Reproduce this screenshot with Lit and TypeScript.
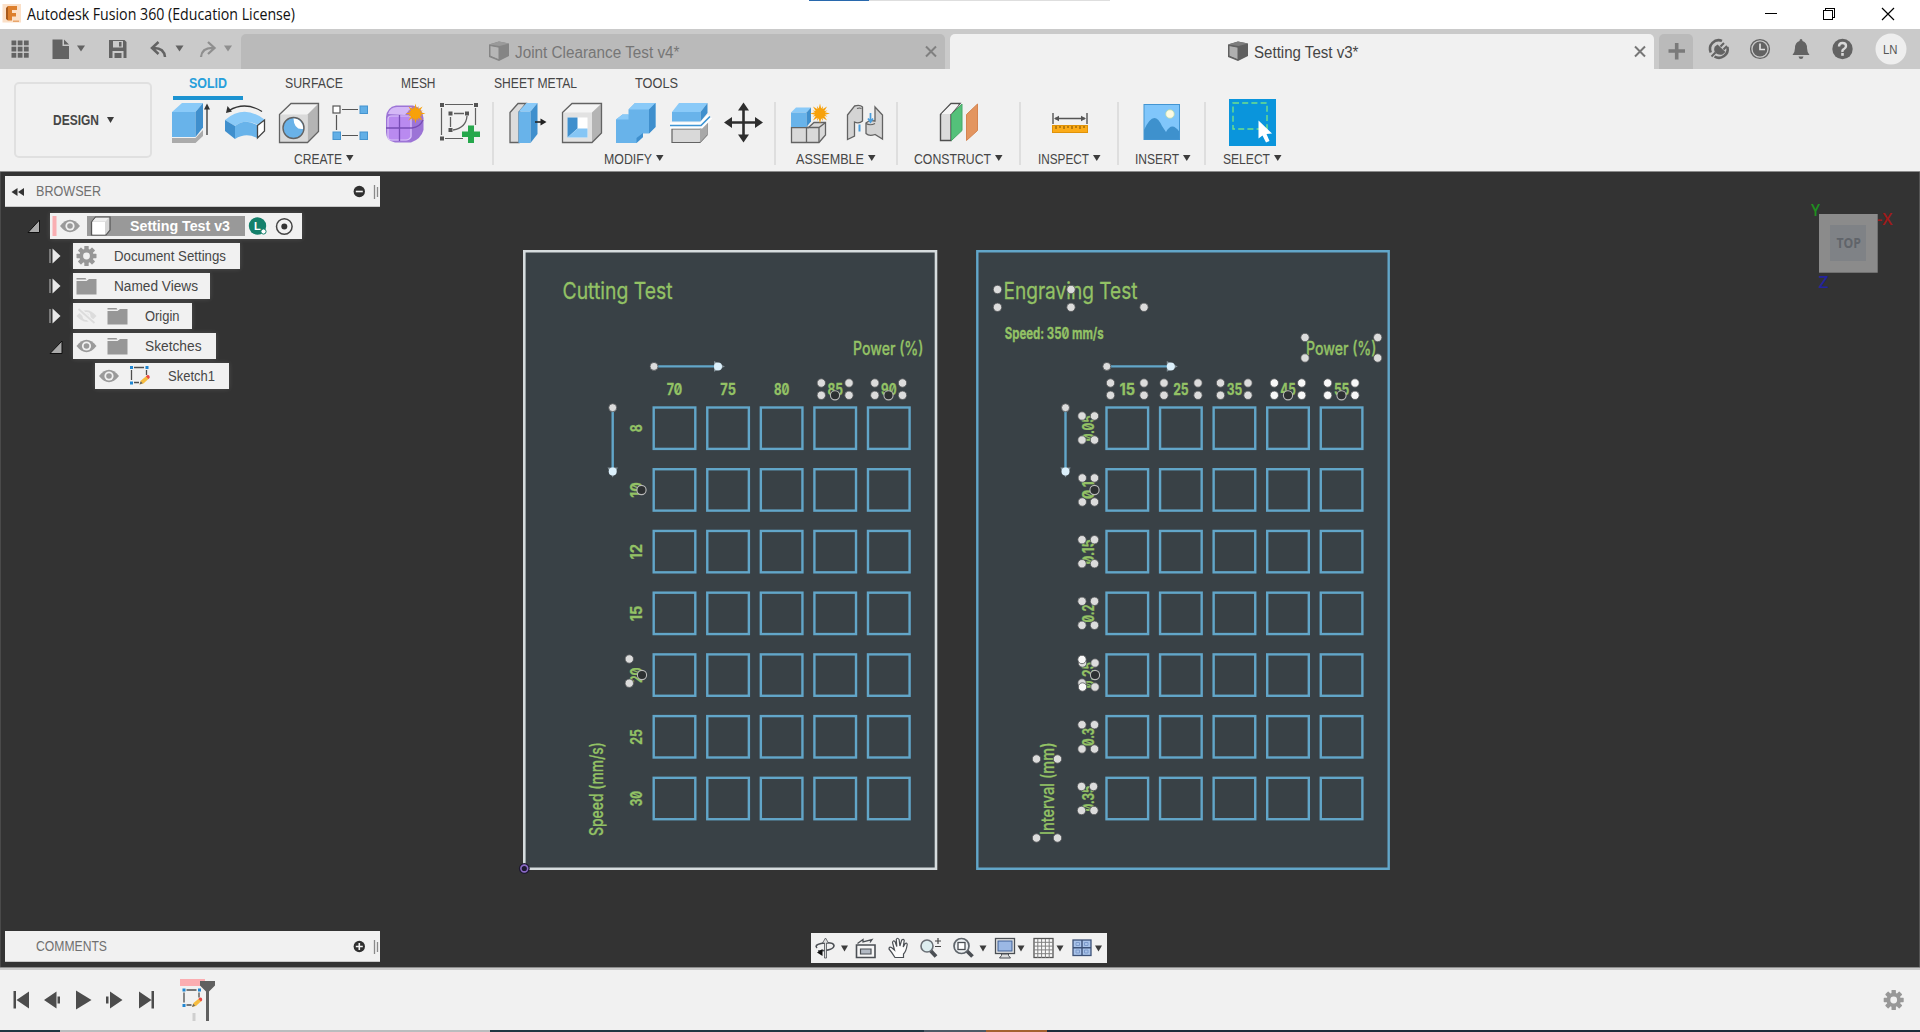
import { LitElement, html, svg, css, SVGTemplateResult, TemplateResult } from "lit";
import { customElement, property } from "lit/decorators.js";

/* A slice of a toolbar strip; drawing coordinates run from x0 to x1 and y0 to y1. */
const slice = (x0: number, x1: number, y0: number, y1: number, body: SVGTemplateResult | SVGTemplateResult[]) =>
  html`<svg class="slice" width=${x1 - x0} height=${y1 - y0} viewBox="${x0} ${y0} ${x1 - x0} ${y1 - y0}">${body}</svg>`;

/* A text run condensed to a fixed advance width. */
const label = (text: string, width: number, cls = "ui14") =>
  html`<svg class="label" width=${width} height="20"><text class=${cls} x="0" y="15" textLength=${width} lengthAdjust="spacingAndGlyphs">${text}</text></svg>`;

const caret = (x: number, y: number, w = 8, fill = "#3c3c3c") =>
  svg`<path d="M${x} ${y}h${w}l${-w / 2} 6z" fill=${fill}/>`;

const gearPath = (cx: number, cy: number, fill: string) => svg`
  <g transform="translate(${cx} ${cy})" fill=${fill}>
    ${[0, 45, 90, 135].map((a) => svg`<rect x="-2.2" y="-10" width="4.4" height="20" rx="0.6" transform="rotate(${a})"/>`)}
    <circle r="7.2"/><circle r="3.4" fill="#f1f1f1"/>
  </g>`;

const star = (cx: number, cy: number) => svg`
  <g transform="translate(${cx} ${cy})" fill="#f7a10a">
    ${[0, 22.5, 45, 67.5].map((a) => svg`<path d="M0 -10L2.4 0L0 10L-2.4 0Z M-10 0L0 -2.4L10 0L0 2.4Z" transform="rotate(${a}) scale(${a % 45 ? 0.8 : 1})"/>`)}
    <circle r="5"/>
  </g>`;

const eye = (cx: number) => svg`
  <path d="M${cx - 10} 13Q${cx} 0.5 ${cx + 10} 13Q${cx} 25.5 ${cx - 10} 13Z" fill="#9a9a9a"/>
  <circle cx=${cx} cy="13" r="4.6" fill="#f1f1f1"/><circle cx=${cx} cy="13" r="2.8" fill="#9a9a9a"/>`;

const eyeOff = (cx: number) => svg`
  <path d="M${cx - 10} 13Q${cx} 1.5 ${cx + 10} 13Q${cx} 24.5 ${cx - 10} 13Z" fill="#dcdcdc"/>
  <circle cx=${cx} cy="13" r="4" fill="#f1f1f1"/><circle cx=${cx} cy="13" r="2.4" fill="#dcdcdc"/>
  <path d="M${cx - 9} 5L${cx + 8} 21" stroke="#f1f1f1" stroke-width="5"/><path d="M${cx - 8} 6L${cx + 8} 20" stroke="#dcdcdc" stroke-width="1.8"/>`;

const folder = (x: number) => svg`<path d="M${x} 5h9l1 1.6h-10z M${x} 8h10l2.5 -2h7.5v15.500h-20z" fill="#979797"/>`;

const sketchMark = (x: number, y: number) => svg`
  <path d="M${x + 1.5} ${y + 4}v10 M${x + 4} ${y + 1.500}h10 M${x + 16.500} ${y + 4}v5 M${x + 4} ${y + 16.500}h5" stroke="#4f4f4f" stroke-width="1.300" fill="none"/>
  <path d="M${x} ${y}h3v3h-3z M${x + 15.500} ${y}h3v3h-3z M${x} ${y + 15.500}h3v3h-3z" fill="#1f86d2"/>
  <path d="M${x + 9.500} ${y + 18.500}l1.500 -4l6 -5l2.500 2.500l-6 5.500z" fill="#f6bc3f"/>
  <path d="M${x + 16} ${y + 10.500}q2 -2.500 3.500 -.500q1 1.500 -1 3z" fill="#ea4747"/>
  <path d="M${x + 9.500} ${y + 18.500}l1.200 -3.200l2 2z" fill="#666"/>`;

const docCube = (x: number, a: string, b: string, c: string) => svg`
  <path d="M${x} 44.500L${x + 10} 41.500L${x + 20} 43.500V56L${x + 10} 61L${x} 57Z" fill=${b}/>
  <path d="M${x} 44.500L${x + 10} 41.500L${x + 20} 43.500L${x + 10.500} 46Z" fill=${c}/>
  <path d="M${x + 1} 45.500L${x + 10} 47.200V59.800L${x + 1} 56Z" fill=${a} stroke=${b} stroke-width="1"/>`;

const E = "#636363";

const createIcons = [
  slice(162, 218, 99, 147, svg`
    <path d="M172 138h23.500l7.500 -8v6l-7.500 7h-23.500z" fill="#ababab"/>
    <path d="M172 112l10 -9h21l-7.500 9z" fill="#8acaf8"/><path d="M172 112h23.500v25h-23.500z" fill="#68b3ea"/>
    <path d="M195.500 112l7.500 -9v24.500l-7.500 9.500z" fill="#3f8fcd"/>
    <path d="M207 135v-26" stroke="#333" stroke-width="1.300"/><path d="M204 109.500l3 -6l3 6z" fill="#333"/>`),
  slice(218, 272, 99, 147, svg`
    <path d="M225 120Q244 104 264.500 119.500L258 125Q245 118 235 126Z" fill="#8acaf8"/>
    <path d="M225 120L235 126V139L225 131Z" fill="#3f8fcd"/>
    <path d="M235 126Q245 118 257 125V138Q246 132 235 139Z" fill="#68b3ea"/>
    <path d="M257.500 125.500L264.500 120V131L257.500 138Z" fill="#fff" stroke="#444" stroke-width="1.300"/>
    <path d="M229 110.500Q245 101 262 111.500" fill="none" stroke="#333" stroke-width="1.300"/><path d="M226 113l1.500 -7l4.500 5.500z" fill="#333"/>`),
  slice(272, 326, 99, 147, svg`
    <path d="M279.500 114.500L291 103.500H318.500L307.500 114.500Z" fill="#f3f3f3"/><path d="M307.500 114.500L318.500 103.500V131.500L307.500 142.500Z" fill="#b4b4b4"/>
    <path d="M279.500 114.500H307.500V142.500H279.500Z" fill="#dadada"/><path d="M279.500 114.500L291 103.500H318.500V131.500L307.500 142.500H279.500Z" fill="none" stroke=${E} stroke-width="1.300"/>
    <circle cx="293.500" cy="128" r="10.500" fill="#6ab2e8" stroke=${E} stroke-width="1.400"/><path d="M293.500 118.500A9.500 9.500 0 0 1 303 129Q294 130 293.500 118.500Z" fill="#fff"/>`),
  slice(326, 378, 99, 147, svg`
    <path d="M342 109.500h16 M336.500 115v15 M342 135.500h16" stroke="#555" stroke-width="1.200"/>
    <rect x="333" y="106" width="7" height="7" fill="#fff" stroke="#555" stroke-width="1.200"/>
    <g fill="#62afe6" stroke="#4594cf" stroke-width="1"><rect x="360" y="106" width="7.500" height="7.500"/><rect x="333" y="132" width="7.500" height="7.500"/><rect x="360" y="132" width="7.500" height="7.500"/></g>`),
  slice(378, 432, 99, 147, svg`
    <path d="M386 117Q387 107 396 105.500H413Q423 108 423.500 118V130Q421 139 411 142.500H395Q386 141 386 132Z" fill="#9c74d6"/>
    <path d="M388 114Q390 107 397 107H412L405 115Z" fill="#d4b8f6"/><rect x="387.500" y="115.500" width="24" height="25" rx="5" fill="#b98af0"/>
    <path d="M391 116h17q3 0 3 3v18q-2 3 -5 3h-15q-3 0 -3 -3v-18q0 -3 3 -3z" fill="none" stroke="#d9c3f7" stroke-width="1.200"/>
    <path d="M399.500 115v26 M386 128H412Q420 127 423 120" stroke="#774cb5" stroke-width="1.300" fill="none"/>${star(415.500, 113.500)}`),
  slice(432, 486, 99, 147, svg`
    <path d="M445 104.500h28 M441.500 108v27 M475.500 108v17 M445 138.500h18" stroke="#606060" stroke-width="1.200"/>
    <path d="M454 113.500h10 M450.500 117v10 M467 116Q466 128 453 130" stroke="#606060" stroke-width="1.300" fill="none"/>
    <path d="M440 103h4v4h-4z M474 103h4v4h-4z M440 136.500h4v4h-4z M448.500 111.500h4v4h-4z M465 111.500h4v4h-4z M448.500 128h4v4h-4z" fill="#555"/>
    <path d="M468 125.500h6v6h6v5.500h-6v6h-6v-6h-6v-5.500h6z" fill="#26a84c"/>`),
];

const modifyIcons = [
  slice(503, 552, 99, 147, svg`
    <path d="M509 112.500L517 103.500H525L518 112V142.500H509Z" fill="#dcdcdc" stroke=${E} stroke-width="1.300"/>
    <path d="M517.500 111.500L525.500 103H536.500L529.500 111.500Z" fill="#8acaf8"/><path d="M517.500 111.500h12v31.500h-12z" fill="#68b3ea"/><path d="M529.500 111.500L536.500 103V134L529.500 143Z" fill="#3f8fcd"/>
    <path d="M534 122h7" stroke="#222" stroke-width="1.600"/><path d="M539.500 118.500l6 3.500l-6 3.500z" fill="#222"/>`),
  slice(552, 606, 99, 147, svg`
    <path d="M561.500 112.500L571 103.500H600.500L591 112.500Z" fill="#f5f5f5"/><path d="M591 112.500L600.500 103.500V133L591 142.500Z" fill="#b4b4b4"/>
    <path d="M561.500 112.500H591V142.500H561.500Z" fill="#e2e2e2"/><path d="M561.500 112.500L571 103.500H600.500V133L591 142.500H561.500Z" fill="none" stroke=${E} stroke-width="1.300"/>
    <rect x="566.500" y="117.500" width="20" height="20" fill="#fff"/><path d="M566.500 117.500h10v11l-10 9z" fill="#3f8fcd"/><path d="M576.500 128.500h10v9h-20z" fill="#86c6f5"/>`),
  slice(606, 661, 99, 147, svg`
    <path d="M615 119.500L621.500 114.500H627.500V109.500L634 103H654.500V127L648 133.500H642V137L635.500 143H615Z" fill="#68b3ea"/>
    <path d="M627.500 109.500L634 103H654.500L648 109.500Z M615 119.500L621.500 114.500H627.500V119.500Z" fill="#8acaf8"/>
    <path d="M648 109.500L654.500 103V127L648 133.500Z M635.500 138L642 133V137L635.500 143Z" fill="#3f8fcd"/>`),
  slice(661, 715, 99, 147, svg`
    <path d="M671 129h28l7 -7v13l-7 7.500h-28z" fill="#d9d9d9" stroke=${E} stroke-width="1.200"/><path d="M699 129l7 -7v13l-7 7.500z" fill="#a8a8a8"/>
    <path d="M671 112l7 -9h28.500l-7 9z" fill="#8acaf8"/><path d="M671 112h28.500v9.500h-28.500z" fill="#68b3ea"/><path d="M699.500 112l7 -9v10l-7 8.500z" fill="#3f8fcd"/>
    <path d="M669 125.500h31l9 -9" fill="none" stroke="#fff" stroke-width="6"/><path d="M669 125.500h31l9 -9" fill="none" stroke="#3f95d4" stroke-width="1.700"/>`),
  slice(715, 764, 99, 147, svg`
    <path d="M742.500 108v29 M728 122.500h29" stroke="#2e2e2e" stroke-width="2.600"/>
    <path d="M737 110.500l5.500 -8l5.500 8z M737 134.500l5.500 8l5.500 -8z M731 117l-8 5.500l8 5.500z M754 117l8 5.500l-8 5.500z" fill="#2e2e2e"/>`),
];

const assembleIcons = [
  slice(785, 837, 99, 147, svg`
    <path d="M807 128L813 122.500H824.500V135L818 142.500H790.500V127.500H807" fill="#d9d9d9" stroke=${E} stroke-width="1.300"/><path d="M805.500 127.500V142.500 M805.500 127.500H818L824.500 122.500 M818 127.500V142" fill="none" stroke=${E} stroke-width="1.300"/>
    <path d="M790 112.500L795 107.500H810L805.500 112.500Z" fill="#8acaf8"/><path d="M790 112.500h15.500v14.500h-15.500z" fill="#68b3ea"/><path d="M805.500 112.500l4.500 -5v14l-4.500 5.500z" fill="#3f8fcd"/>${star(819, 113.500)}`),
  slice(837, 886, 99, 147, svg`
    <path d="M846.500 115L853.500 106Q859 104.500 861.500 107V121Q858 124 853.500 122V136L846.500 139.500Z" fill="#d4d4d4" stroke=${E} stroke-width="1.300"/>
    <path d="M856 108.500Q858.500 107.500 860.500 108.500" fill="none" stroke=${E} stroke-width="1.200"/><path d="M858.500 124.500v7" stroke="#4a9ddb" stroke-width="2"/>
    <path d="M874 107L881.500 115V139L874 134.500Q868 136.500 865 133.500V123Q868 119.500 874 121Z" fill="#d4d4d4" stroke=${E} stroke-width="1.300"/>
    <path d="M865 123.500Q869 126 874 123.500" fill="none" stroke=${E} stroke-width="1.200"/>
    <path d="M869.500 113v9 M867 118.500l2.500 3.500l2.500 -3.500" stroke="#4a9ddb" stroke-width="1.700" fill="none"/>`),
];

const constructIcon = slice(935, 982, 99, 147, svg`
  <path d="M940.500 114.500L951 103.500H960L951 114.500V140.500H940.500Z" fill="#dcdcdc" stroke="#505050" stroke-width="1.400"/><path d="M941.500 114L951 104.500H959L951 114Z" fill="#f5f5f5"/>
  <path d="M951.500 114.500L962 104V130.500L951.500 140.500Z" fill="#54c17a" stroke="#46a968"/><path d="M966.500 114.500L977.500 104V130.500L966.500 140.500Z" fill="#e3955f" stroke="#d58450"/>`);

const inspectIcon = slice(1046, 1093, 99, 147, svg`
  <path d="M1053 113v11 M1087 113v11 M1055 118.500h30" stroke="#555" stroke-width="1.400"/><path d="M1054 118.500l5 -2.800v5.600z M1086 118.500l-5 -2.800v5.600z" fill="#555"/>
  <rect x="1052.500" y="125.500" width="35" height="7" fill="#fbab18" stroke="#e09309"/>
  <path d="M1056 126v3 M1060 126v2 M1064 126v3 M1068 126v2 M1072 126v3 M1076 126v2 M1080 126v3 M1084 126v2" stroke="#7a4e00" stroke-width="1"/>`);

const insertIcon = slice(1139, 1185, 99, 147, svg`
  <rect x="1144" y="104.500" width="35.500" height="35" fill="#80c6fb"/>
  <path d="M1144 130Q1154 108 1162 126L1166 132Q1172 121 1179.500 132V139.500H1144Z" fill="#3e91cd"/>
  <circle cx="1170" cy="114" r="4.300" fill="#fdfbe2" stroke="#b5d8ae" stroke-width=".800"/><rect x="1144" y="104.500" width="35.500" height="35" fill="none" stroke="#4395d2"/>`);

const selectIcon = slice(1228, 1276, 99, 147, svg`
  <rect x="1229" y="99" width="47" height="47" fill="#0a95dc"/><rect x="1233" y="103" width="34" height="26" fill="none" stroke="#6fe08a" stroke-width="1.400" stroke-dasharray="6 3.200"/>
  <path d="M1258.500 120.500V138.500L1262.500 135.500L1266 142.500L1269.500 141L1266.500 134L1272 133.500Z" fill="#fff"/>`);

const groups: [string, string, number, TemplateResult[]][] = [
  ["create", "CREATE", 48, createIcons],
  ["modify", "MODIFY", 48, modifyIcons],
  ["assemble", "ASSEMBLE", 68, assembleIcons],
  ["construct", "CONSTRUCT", 77, [constructIcon]],
  ["inspect", "INSPECT", 51, [inspectIcon]],
  ["insert", "INSERT", 44, [insertIcon]],
  ["select", "SELECT", 47, [selectIcon]],
];

const sharedStyles = css`
  svg { display: block; flex: none; }
  .label { overflow: visible; }
  .ui14 { font: 14px "Liberation Sans", Arial, sans-serif; fill: #464646; }
  .ui14b { font: bold 14px "Liberation Sans", Arial, sans-serif; fill: #464646; }
`;

@customElement("title-bar")
class TitleBar extends LitElement {
  static styles = [sharedStyles, css`
    :host { display: flex; height: 29px; background: #fff; position: relative; }
    .grow { flex: 1; }
    .title { font: 15.5px "Open Sans", "Noto Sans", sans-serif; fill: #111; }
    .hint { position: absolute; left: 809px; top: 0; width: 301px; height: 1px; background: linear-gradient(90deg, #2868ad 60px, #dedede 60px); }
    .text { margin-top: 5px; }
  `];
  render() {
    return html`
      ${slice(0, 27, 0, 29, svg`
        <rect x="2.500" y="4" width="18.500" height="18.500" fill="#fbe0c8"/>
        <path d="M8 6h9v4h-5v3h4v3.500h-4v4h-4z" fill="#dd7f2c"/><path d="M8 6l-2 2v11l2 1.500z" fill="#a85a1c"/><path d="M13 20.500h6v1.500h-6z" fill="#e9a66c"/>`)}
      <div class="text">${label("Autodesk Fusion 360 (Education License)", 268, "title")}</div>
      <div class="grow"></div>
      ${slice(1740, 1920, 0, 29, svg`
        <path d="M1765 13.500h12 M1823.500 10.500h9v9h-9z M1825.500 10.500v-2h9v9h-2" fill="none" stroke="#000" shape-rendering="crispEdges"/>
        <path d="M1882 8l12 12 M1894 8l-12 12" stroke="#000" stroke-width="1.200"/>`)}
      <div class="hint"></div>`;
  }
}

@customElement("document-bar")
class DocumentBar extends LitElement {
  static styles = [sharedStyles, css`
    :host { display: flex; height: 40px; background: #cacaca; }
    .tab { display: flex; width: 704px; height: 35px; margin: 5px 5px 0 0; border-radius: 5px 5px 0 0; background: #bababa; }
    .tab.active { background: #f1f1f1; }
    .name { flex: 1; display: flex; justify-content: center; gap: 5px; }
    .name .label { margin-top: 9px; }
    .close { overflow: visible; }
    .add { width: 34px; height: 35px; margin-top: 5px; background: #bababa; border-radius: 5px 5px 0 0; }
    .dim { font: 16px "Liberation Sans", Arial, sans-serif; fill: #767676; }
    .lit { font: 16px "Liberation Sans", Arial, sans-serif; fill: #454545; }
    .user { font: 12.5px "Liberation Sans", Arial, sans-serif; fill: #555; }
  `];
  private tab(name: string, width: number, active: boolean) {
    return html`<div class="tab ${active ? "active" : ""}">
      <div class="name">
        ${slice(0, 21, 34, 69, active ? docCube(0, "#b0b0b0", "#606060", "#7d7d7d") : docCube(0, "#b6b6b6", "#858585", "#9a9a9a"))}
        ${label(name, width, active ? "lit" : "dim")}
      </div>
      <svg class="close" width="18" height="35"><path d="M-1 12.500l10 10 M9 12.500l-10 10" stroke=${active ? "#777" : "#808080"} stroke-width="2"/></svg>
    </div>`;
  }
  render() {
    const c = "#636363";
    return html`
      ${slice(0, 40, 29, 69, [0, 1, 2].flatMap((r) => [0, 1, 2].map((k) => svg`<rect x=${11.5 + k * 6.200} y=${40.500 + r * 6.200} width="4.800" height="4.800" fill=${c}/>`)))}
      ${slice(40, 96, 29, 69, svg`<path d="M52.500 39.500h10v6.500h6.500v13h-16.500z M64 39.500l5 5h-5z" fill=${c}/>${caret(77, 45.500, 8, c)}`)}
      ${slice(96, 140, 29, 69, svg`<path d="M109 40h15.500l2 2v16h-17.500z" fill=${c}/><path d="M113 41h10v6.500h-10z M112.500 51h11v7h-11z" fill="#cacaca"/><path d="M119 42h2.500v4.500h-2.500z M114.500 53h7v5h-7z" fill=${c}/>`)}
      ${slice(140, 192, 29, 69, svg`<path d="M158.500 42l-6.500 6l6.500 6 M152 48Q164 47 165 57" fill="none" stroke=${c} stroke-width="2.500"/>${caret(175.500, 45.500, 8, c)}`)}
      ${slice(192, 241, 29, 69, svg`<path d="M208 42l6.500 6l-6.500 6 M214.500 48Q202 47 201 57" fill="none" stroke="#8f8f8f" stroke-width="2.300"/>${caret(224, 45.500, 8, "#8f8f8f")}`)}
      ${this.tab("Joint Clearance Test v4*", 164.5, false)}
      ${this.tab("Setting Test v3*", 104.5, true)}
      <div class="add">${slice(1659, 1693, 34, 69, svg`<path d="M1676.700 43v16.500 M1668.500 51h16.500" stroke="#7a7a7a" stroke-width="3.600"/>`)}</div>
      ${slice(1693, 1740, 29, 69, svg`
        <path d="M1722 40.900A8.700 8.700 0 0 0 1710.800 52.500 M1727.400 47A8.700 8.700 0 0 1 1714.500 56.500" fill="none" stroke=${c} stroke-width="2.600"/>
        <path d="M1711.500 56.500l4 -4 M1720.500 46.500l3.500 -3.500 M1723.500 49.500l3.500 -3.500" stroke=${c} stroke-width="2"/>
        <path d="M1717.500 44.500l8 7.500l-3 2.500q-4 1 -7 -1.500q-2.500 -3.500 -.500 -6.500z" fill=${c}/>`)}
      ${slice(1740, 1782, 29, 69, svg`<circle cx="1760" cy="49" r="9.400" fill="#cacaca" stroke=${c} stroke-width="1.400"/><circle cx="1760" cy="49" r="7.400" fill=${c}/><path d="M1760 43.500v6h5" fill="none" stroke="#dedede" stroke-width="1.700"/>`)}
      ${slice(1782, 1822, 29, 69, svg`<path d="M1801 39q1.500 0 1.500 2q4.500 1.500 4.500 7q0 4 2.500 7h-17q2.500 -3 2.500 -7q0 -5.500 4.500 -7q0 -2 1.500 -2z M1798.500 56.500h5q-.500 2.500 -2.500 2.500t-2.500 -2.500z" fill=${c}/>`)}
      ${slice(1822, 1866, 29, 69, svg`<circle cx="1842.500" cy="49" r="10.200" fill=${c}/><path d="M1839 46.500q0 -3.500 3.500 -3.500t3.500 3q0 2 -2 3t-1.500 3" fill="none" stroke="#d8d8d8" stroke-width="2.400"/><rect x="1841.200" y="53" width="2.600" height="2.800" fill="#d8d8d8"/>`)}
      ${slice(1866, 1920, 29, 69, svg`<circle cx="1891" cy="49" r="15.500" fill="#eee"/><text class="user" x="1883" y="53.500" textLength="14.500" lengthAdjust="spacingAndGlyphs">LN</text>`)}`;
  }
}

@customElement("ribbon-bar")
class RibbonBar extends LitElement {
  static styles = [sharedStyles, css`
    :host { display: flex; height: 102px; background: #f1f1f1; border-bottom: 1px solid #8b8b8b; }
    .side { width: 156px; padding: 13px 4px 13px 14px; box-sizing: border-box; }
    .design { box-sizing: border-box; height: 76px; border: 2px solid #e0e0e0; border-radius: 5px; display: flex; align-items: center; justify-content: center; gap: 8px; }
    .main { display: flex; flex-direction: column; }
    .tabs { display: flex; gap: 26px; height: 31px; padding-left: 17px; }
    .tab { box-sizing: border-box; height: 31px; padding: 4px 16px 0; }
    .tab.on { border-bottom: 4px solid #1c93d1; }
    .blue { font: bold 14px "Liberation Sans", Arial, sans-serif; fill: #279fdb; }
    .groups { display: flex; margin-top: 2px; }
    .group { box-sizing: border-box; height: 63px; border-right: 2px solid #dedede; display: flex; flex-direction: column; align-items: center; }
    .group.select { border-right: 0; }
    .create { width: 338px; } .modify { width: 282px; } .assemble { width: 122px; } .construct { width: 123px; }
    .inspect { width: 98px; } .insert { width: 87px; } .select { width: 92px; }
    .create .icons { position: relative; left: -0.5px; }
    .icons { display: flex; margin-top: -3px; }
    .caption { display: flex; gap: 4px; margin-top: 2px; }
    .insert .caption { padding-left: 3px; }
  `];
  render() {
    const tabs: [string, number][] = [["SOLID", 38], ["SURFACE", 58], ["MESH", 34.5], ["SHEET METAL", 83], ["TOOLS", 43]];
    return html`
      <div class="side"><div class="design">${label("DESIGN", 46, "ui14b")}<svg width="7" height="6">${caret(0, 0, 7)}</svg></div></div>
      <div class="main">
        <div class="tabs">${tabs.map(([t, w], i) => html`<div class="tab ${i ? "" : "on"}">${label(t, w, i ? "ui14" : "blue")}</div>`)}</div>
        <div class="groups">
          ${groups.map(([id, name, w, icons]) => html`<div class="group ${id}">
            <div class="icons">${icons}</div>
            <div class="caption">${label(name, w)}<svg width="8" height="16">${caret(0, 6, 7.5)}</svg></div>
          </div>`)}
        </div>
      </div>`;
  }
}

@customElement("palette-header")
class PaletteHeader extends LitElement {
  @property() name = "";
  @property({ type: Number }) span = 65;
  @property({ type: Boolean }) open = false;
  static styles = [sharedStyles, css`
    :host { display: flex; width: 375px; height: 31px; background: #f1f1f1; box-shadow: inset 0 -1px #c8c8c8; }
    .text { flex: 1; padding-top: 5px; }
    .grey { font: 14px "Liberation Sans", Arial, sans-serif; fill: #707070; }
  `];
  render() {
    return html`
      <svg width="31" height="31">${this.open ? svg`<path d="M12.500 12v8l-6 -4z M19 12v8l-6 -4z" fill="#333"/>` : ""}</svg>
      <div class="text">${label(this.name, this.span, "grey")}</div>
      <svg width="38" height="31"><circle cx="17.300" cy="15.500" r="5.700" fill="#303030"/>
        <path d=${this.open ? "M13.800 15.500h7" : "M13.800 15.500h7 M17.300 12v7"} stroke="#f4f4f4" stroke-width="1.600"/>
        <path d="M32.500 9v14 M35.500 11v10" stroke="#8a8a8a" stroke-width="1.300"/></svg>`;
  }
}

@customElement("browser-tree")
class BrowserTree extends LitElement {
  static styles = [sharedStyles, css`
    :host { display: flex; flex-direction: column; gap: 4px; }
    .row { display: flex; height: 26px; }
    .chip { display: flex; background: #f1f1f1; box-shadow: 0 0 5px rgba(255, 255, 255, 0.14); }
    .chip .label { margin: 3px 12px 0 0; }
    .chip.wide .label { margin-right: 14px; }
    .picked { display: flex; background: #999; margin: 3px 0; height: 20px; width: 158px; }
    .picked .label { margin: 0; }
    .bold { font: bold 14px "Liberation Sans", Arial, sans-serif; fill: #fff; }
    .badge { font: bold 11px "Liberation Sans", Arial, sans-serif; fill: #fff; }
  `];
  render() {
    const closed = slice(0, 73, 0, 26, svg`<path d="M50 6v14" stroke="#a8a8a8" stroke-width="1.200"/><path d="M52.500 5.500v15l8 -7.500z" fill="#e9e9e9"/>`);
    return html`
      <div class="row">
        ${slice(0, 50, 0, 26, svg`<path d="M28 19.500l11.500 -12.500v12.500z" fill="#aaa" stroke="#0f0f0f"/>`)}
        <div class="chip">
          ${slice(50, 87, 0, 26, svg`<rect x="52.500" y="3" width="4" height="20" fill="#f9aeb2"/>${eye(70)}`)}
          <div class="picked">
            ${slice(87, 130, 3, 23, svg`<path d="M91.500 9l4 -5h14.500v13l-4 5h-14.500z" fill="#d5d5d5" stroke="#555" stroke-width="1.200"/><path d="M92.500 9h12.500v12.500h-12.500z" fill="#fff"/><path d="M92.500 8.500l3 -3.500h13l-3 3.500z" fill="#eee"/>`)}
            ${label("Setting Test v3", 100, "bold")}
          </div>
          ${slice(245, 302, 0, 26, svg`<circle cx="257.500" cy="13" r="8.700" fill="#14806b"/><text class="badge" x="254" y="17">L</text><circle cx="263.500" cy="18.500" r="2.600" fill="#fff" stroke="#14806b"/>
            <circle cx="284.300" cy="13.500" r="7.800" fill="none" stroke="#444" stroke-width="1.500"/><circle cx="284.300" cy="13.500" r="3" fill="#333"/>`)}
        </div>
      </div>
      <div class="row">${closed}<div class="chip wide">${slice(73, 114, 0, 26, gearPath(86.500, 13, "#979797"))}${label("Document Settings", 112)}</div></div>
      <div class="row">${closed}<div class="chip">${slice(73, 114, 0, 26, folder(76.500))}${label("Named Views", 84)}</div></div>
      <div class="row">${closed}<div class="chip">${slice(73, 145, 0, 26, svg`${eyeOff(86.500)}${folder(107.500)}`)}${label("Origin", 34.5)}</div></div>
      <div class="row">${slice(0, 73, 0, 26, svg`<path d="M50 20.500l12 -12.500v12.500z" fill="#aaa" stroke="#0f0f0f"/>`)}
        <div class="chip wide">${slice(73, 145, 0, 26, svg`${eye(86.500)}${folder(107.500)}`)}${label("Sketches", 56.5)}</div></div>
      <div class="row">${slice(0, 95, 0, 26, svg``)}<div class="chip wide">${slice(95, 168, 0, 26, svg`${eye(109)}${sketchMark(130, 3)}`)}${label("Sketch1", 47)}</div></div>`;
  }
}

@customElement("sketch-canvas")
class SketchCanvas extends LitElement {
  static styles = [sharedStyles, css`
    :host { display: block; }
    .t { font-family: Inter, Roboto, sans-serif; font-feature-settings: "zero"; fill: #93c265; stroke: #93c265; stroke-width: 0.3; }
    .big { font-size: 23.5px; }
    .mid { font-size: 18px; font-weight: 500; }
    .small { font-size: 15.5px; font-weight: 700; }
    .edge { fill: none; stroke: #62a6c9; stroke-width: 2.4; }
    .dot { fill: #dcdcdc; stroke: #4f5254; stroke-width: 0.8; }
    .bright { fill: #f8f8f8; }
    .ring { fill: #2d3032; stroke: #b9b9b9; stroke-width: 1.1; }
    .tip { fill: #dcf0fb; }
    .axis { font: 600 16.5px "Open Sans", "Noto Sans", sans-serif; }
    .top { font: bold 13.5px "Open Sans", "Noto Sans", sans-serif; fill: #60646a; }
  `];
  private text(s: string, x: number, y: number, len: number, cls: string, up = false) {
    return svg`<text class="t ${cls}" textLength=${len} lengthAdjust="spacingAndGlyphs" transform="translate(${x} ${y}) rotate(${up ? -90 : 0})">${s}</text>`;
  }
  private sheet(dx: number, cols: string[], rows: string[], lens: number[]) {
    return svg`
      ${rows.map((_, r) => cols.map((_, c) => svg`<rect class="edge" x=${653.700 + dx + c * 53.570} y=${407.500 + r * 61.720} width="41.600" height="41.400"/>`))}
      ${cols.map((s, c) => this.text(s, 666.800 + dx + c * 53.570, 395, 15.500, "small"))}
      ${rows.map((s, r) => this.text(s, 641.500 + dx, 428.300 + r * 61.720 + lens[r] / 2, lens[r], "small", true))}
      <g transform="translate(${dx} 0)">
        <path class="edge" d="M654 366.400H718 M612.700 407.700V471"/>
        <path class="tip" d="M714 361l11 5.400l-11 5.400z M607.500 467.500l5.200 10l5.200 -10z" opacity=".45"/>
        <circle class="dot" cx="654" cy="366.400" r="4"/><circle class="tip" cx="718" cy="366.400" r="4"/>
        <circle class="dot" cx="612.700" cy="407.700" r="4"/><circle class="tip" cx="612.700" cy="471.500" r="4"/>
      </g>`;
  }
  render() {
    const dots: number[][] = [
      [821.300, 383], [849, 383], [821.300, 395.300], [849, 395.300], [874.800, 383], [902.500, 383], [874.800, 395.300], [902.500, 395.300],
      [629.300, 659], [629.300, 683.200],
      [997.500, 289.500], [1071, 289.500], [997.500, 307.300], [1071, 307.300], [1144, 307.300],
      [1305, 337.500], [1377.700, 337.500], [1305, 358], [1377.700, 358],
      [1110.500, 383], [1144, 383], [1110.500, 395.300], [1144, 395.300], [1164, 383], [1198, 383], [1164, 395.300], [1198, 395.300],
      [1220.500, 383], [1248, 383], [1220.500, 395.300], [1248, 395.300],
      [1082, 416], [1094.500, 416], [1082, 440], [1094.500, 440], [1082.300, 478], [1094.500, 478], [1082.300, 502], [1094.500, 502],
      [1082, 539.700], [1094.500, 539.700], [1082, 563.700], [1094.500, 563.700], [1082, 601.300], [1094.500, 601.300], [1082, 625.300], [1094.500, 625.300],
      [1082.500, 663], [1082, 683], [1095, 663], [1095, 687],
      [1082, 724.700], [1094.500, 724.700], [1082, 749], [1094.500, 749], [1081.500, 786.500], [1093.500, 786.500], [1081.500, 810.500], [1094, 810.500],
      [1036.500, 759], [1057.500, 759], [1036.500, 838], [1057.500, 838],
    ];
    const bright = [[1274.300, 383], [1301.700, 383], [1274.300, 395.300], [1301.700, 395.300], [1327.700, 383], [1355, 383], [1327.700, 395.300], [1355, 395.300], [1082, 659.500], [1082.500, 687]];
    const rings = [[835, 395.300], [888.500, 395.300], [641.500, 490], [642, 675], [1288, 395.300], [1341.500, 395.300], [1094.500, 490], [1095, 675]];
    return html`<svg width="1920" height="795" viewBox="0 172 1920 795">
      <path d="M524.300 251.300H936V868.700H524.300Z" fill="#394146" stroke="#d6dcde" stroke-width="2.600"/>
      <path d="M977.300 251.300H1388.700V868.700H977.300Z" fill="#394146" stroke="#62a6c9" stroke-width="2.400"/>
      ${this.sheet(0, ["70", "75", "80", "85", "90"], ["8", "10", "12", "15", "20", "25", "30"], [8, 15.5, 15.5, 15.5, 15.5, 15.5, 15.5])}
      ${this.sheet(453 - 0.200, ["15", "25", "35", "45", "55"], ["0.05", "0.1", "0.15", "0.2", "0.25", "0.3", "0.35"], [26, 18, 25, 18, 26, 18, 26])}
      ${this.text("Cutting Test", 562.500, 298.700, 110, "big")}
      ${this.text("Engraving Test", 1003.500, 298.700, 134, "big")}
      ${this.text("Speed: 350 mm/s", 1004.700, 338.700, 99, "small")}
      ${this.text("Power (%)", 853, 355, 70.500, "mid")}
      ${this.text("Power (%)", 1306, 355, 70.500, "mid")}
      ${this.text("Speed (mm/s)", 602.500, 836, 94, "mid", true)}
      ${this.text("Interval (mm)", 1053.700, 835, 92.500, "mid", true)}
      ${dots.map(([x, y]) => svg`<circle class="dot" cx=${x} cy=${y} r="4.200"/>`)}
      ${bright.map(([x, y]) => svg`<circle class="dot bright" cx=${x} cy=${y} r="4.200"/>`)}
      ${rings.map(([x, y]) => svg`<circle class="ring" cx=${x} cy=${y} r="4.600"/>`)}
      <circle cx="524.300" cy="868.500" r="5.400" fill="#1d1830"/><circle cx="524.300" cy="868.500" r="3.400" fill="#1d1830" stroke="#8a69c4" stroke-width="1.600"/>
      <text class="axis" x="1811" y="216" fill="#1f8f1f" textLength="9" lengthAdjust="spacingAndGlyphs">Y</text>
      <text class="axis" x="1877" y="225" fill="#a01a1a" textLength="15.500" lengthAdjust="spacingAndGlyphs">-X</text>
      <text class="axis" x="1818.500" y="288" fill="#24249e" textLength="10" lengthAdjust="spacingAndGlyphs">Z</text>
      <rect x="1819" y="214" width="58.700" height="58.700" fill="#8b8b8b"/><rect x="1830" y="225" width="36" height="36" fill="#7f8286"/>
      <text class="top" x="1836.500" y="248" textLength="24.500" lengthAdjust="spacingAndGlyphs">TOP</text>
    </svg>`;
  }
}

@customElement("navigation-bar")
class NavigationBar extends LitElement {
  static styles = [sharedStyles, css`:host { display: flex; width: 296px; height: 30px; background: #f1f1f1; }`];
  render() {
    const s = "#4b4f54";
    const part = (a: number, b: number, body: SVGTemplateResult) => slice(a, b, 933, 963, body);
    return html`
      ${part(811, 852, svg`<path d="M817 948q-3 -3 4 -4.500q12 -2 13 2q0 5 -16 5.500" fill="none" stroke=${s} stroke-width="1.600"/><path d="M817 952.500l5.500 -3.500v7z" fill="#111"/><path d="M824.500 958v-15h-2l3 -5l3 5h-2v15z" fill="#ddd" stroke=${s} stroke-width=".800"/>${caret(841, 945.500, 7)}`)}
      ${part(852, 880, svg`<path d="M856.500 945h18.500v12.500h-18.500z" fill="#f6f6f6" stroke=${s} stroke-width="1.600"/><path d="M860.500 949h10.500v5h-10.500z" fill="#b3bac4" stroke=${s} stroke-width="1.200"/><path d="M857.500 943.500l5.500 -4v2.500l9 -2.500l-2 3" fill="none" stroke=${s} stroke-width="1.300"/>`)}
      ${part(880, 914, svg`<path d="M895 957.500q-3 -5 -6 -8.500q0 -2.500 2.500 -1.500l3 2.500l-2 -7.500q.500 -2.500 2.500 -1l1.800 5l-.500 -7q1 -2.500 2.800 0l.800 6.500l1.800 -6q2 -1.500 2.500 .500l-1 6.500l2 -3.500q2 -1 2 1q-1 7 -3.700 9.500v3.500z" fill="#fcfcfc" stroke=${s} stroke-width="1.200"/>`)}
      ${part(914, 946, svg`<path d="M930 950l6 6.500" stroke=${s} stroke-width="3.800"/><circle cx="927" cy="946" r="6" fill="#ddeef0" stroke="#6a7076" stroke-width="1.600"/><path d="M935 941h6 M938 938v6 M935 946.500h6" stroke="#444" stroke-width="1.200"/>`)}
      ${part(946, 990, svg`<path d="M966 950l6.500 6.500" stroke=${s} stroke-width="3.800"/><circle cx="961.500" cy="946" r="7.500" fill="#eef1f3" stroke="#5f656b" stroke-width="1.700"/><rect x="958" y="942.500" width="7" height="7" fill="#fff" stroke=${s} stroke-width="1.300"/>${caret(979.500, 945.500, 7)}`)}
      ${part(990, 1029, svg`<rect x="995.500" y="938.500" width="19" height="15" fill="#e9e9e9" stroke=${s} stroke-width="1.300"/><rect x="998" y="941" width="14" height="10" fill="#9bb8e4" stroke="#3f5f94"/><path d="M1001.500 954h7v1.500l2 2.500h-11l2 -2.500z" fill="#ddd" stroke=${s}/>${caret(1017.500, 945.500, 7)}`)}
      ${part(1029, 1067, svg`<rect x="1034" y="938.500" width="19" height="19" fill="#fafafa" stroke="#555" stroke-width="1.300"/><path d="M1037.800 939v19 M1041.600 939v19 M1045.400 939v19 M1049.200 939v19 M1034 942.300h19 M1034 946.100h19 M1034 949.900h19 M1034 953.700h19" stroke="#808080" stroke-width="1"/>${caret(1056.500, 945.500, 7)}`)}
      ${part(1067, 1107, svg`<rect x="1073" y="940" width="18" height="15.500" fill="#a9c3ea" stroke="#3d5278" stroke-width="1.300"/><path d="M1082 940v15.500 M1073 947.700h18" stroke="#3d5278" stroke-width="1.400"/><path d="M1076 942.500h3.500v3h-3.500z M1084.500 942.500h3.500v3h-3.500z M1076 950h3.500v3h-3.500z M1084.500 950h3.500v3h-3.500z" fill="none" stroke="#7d9bcc"/>${caret(1095, 945.500, 7)}`)}`;
  }
}

@customElement("timeline-bar")
class TimelineBar extends LitElement {
  static styles = [sharedStyles, css`
    :host { display: flex; justify-content: space-between; box-sizing: border-box; height: 63px; background: #f1f1f1; border-top: 1px solid #8d8d8d; box-shadow: inset 0 2px #cbcbcb; }
    .left { display: flex; }
  `];
  render() {
    const part = (a: number, b: number, body: SVGTemplateResult) => slice(a, b, 968, 1030, body);
    const c = "#4c4c4c";
    return html`
      <div class="left">
        ${part(0, 36, svg`<path d="M13.500 991h2.500v17.500h-2.500z M29 991.500v17l-12.500 -8.500z" fill=${c}/>`)}
        ${part(36, 68, svg`<path d="M44 1000l12.500 -8.500v17z M57.500 996.500h2.500v7h-2.500z" fill=${c}/>`)}
        ${part(68, 98, svg`<path d="M76 990.500l15.500 9.500l-15.500 9.500z" fill=${c}/>`)}
        ${part(98, 130, svg`<path d="M110 991.500l12.500 8.500l-12.500 8.500z M106 996.500h2.500v7h-2.500z" fill=${c}/>`)}
        ${part(130, 170, svg`<path d="M139 991.500l12.500 8.500l-12.500 8.500z M151.500 991h2.500v17.500h-2.500z" fill=${c}/>`)}
        ${part(170, 230, svg`<rect x="180" y="979" width="25" height="7" fill="#fbadb1"/>${sketchMark(182.500, 988.500)}
          <path d="M192.500 1013h3v8h-3z" fill="#cfcfcf"/><path d="M200 981h15v4.500l-6 6v29.500h-3v-29.500l-6 -6z" fill="#606060"/>`)}
      </div>
      ${part(1870, 1920, gearPath(1893.700, 1000, "#989898"))}`;
  }
}

@customElement("app-root")
class AppRoot extends LitElement {
  static styles = css`
    :host { display: flex; flex-direction: column; width: 1920px; height: 1032px; overflow: hidden; background: #333; }
    .stage { position: relative; flex: 1; box-sizing: border-box; display: flex; flex-direction: column; background: #333; border-left: 1px solid #4a4a4a; border-right: 1px solid #555; }
    .sketch { position: absolute; left: -1px; top: 0; }
    .tools { position: relative; display: flex; flex-direction: column; flex: 1; padding: 4px 0 4px; margin-left: -1px; }
    .head { margin-left: 5px; }
    .tree { margin-top: 6px; flex: 1; }
    .foot { display: grid; grid-template-columns: 375px 296px; column-gap: 431px; align-items: end; padding-left: 5px; }
    .comments { margin-bottom: 1px; }
    .desk { height: 2px; background: linear-gradient(90deg, #223743 60px, #b9bcbe 60px 490px, #223743 490px 924px, #4d5966 924px 986px, #a5612f 986px 1047px, #1e2c3a 1047px); }
  `;
  render() {
    return html`
      <title-bar></title-bar>
      <document-bar></document-bar>
      <ribbon-bar></ribbon-bar>
      <main class="stage">
        <sketch-canvas class="sketch"></sketch-canvas>
        <div class="tools">
          <palette-header class="head" name="BROWSER" span="65" open></palette-header>
          <browser-tree class="tree"></browser-tree>
          <div class="foot">
            <palette-header class="comments" name="COMMENTS" span="71"></palette-header>
            <navigation-bar></navigation-bar>
          </div>
        </div>
      </main>
      <timeline-bar></timeline-bar>
      <div class="desk"></div>`;
  }
}
